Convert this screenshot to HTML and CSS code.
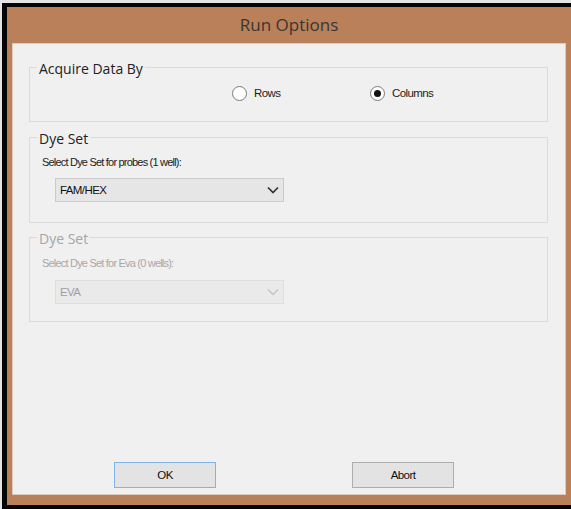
FILE: index.html
```html
<!DOCTYPE html>
<html lang="en">
<head>
<meta charset="utf-8">
<title>Run Options</title>
<link rel="stylesheet" href="styles.css">
</head>
<body>
<div class="window">
  <div class="titlebar">Run Options</div>
  <div class="panel">
    <div class="group group-acquire">
      <span class="legend">Acquire Data By</span>
      <div class="radio-row">
        <label class="option"><span class="radio"></span><span class="option-text">Rows</span></label>
        <label class="option"><span class="radio checked"></span><span class="option-text">Columns</span></label>
      </div>
    </div>

    <div class="group group-dye">
      <span class="legend">Dye Set</span>
      <div class="field-label">Select Dye Set for probes (1 well):</div>
      <div class="combo">
        <span class="combo-value">FAM/HEX</span>
        <svg class="chevron" width="12" height="8" viewBox="0 0 12 8"><polyline points="1,1.5 6,6.5 11,1.5" fill="none" stroke="#333" stroke-width="1.7"/></svg>
      </div>
    </div>

    <div class="group group-dye disabled">
      <span class="legend">Dye Set</span>
      <div class="field-label">Select Dye Set for Eva (0 wells):</div>
      <div class="combo">
        <span class="combo-value">EVA</span>
        <svg class="chevron" width="12" height="8" viewBox="0 0 12 8"><polyline points="1,1.5 6,6.5 11,1.5" fill="none" stroke="#c4c4c4" stroke-width="1.5"/></svg>
      </div>
    </div>

    <div class="buttons">
      <button class="btn btn-default" type="button">OK</button>
      <button class="btn" type="button">Abort</button>
    </div>
  </div>
</div>
</body>
</html>
```

FILE: styles.css
```css
* {
  box-sizing: border-box;
}

html, body {
  margin: 0;
  height: 100%;
}

body {
  background: #e4e4e4;
  overflow: hidden;
}

/* Dialog frame */
.window {
  margin: 3px 0 0 2px;
  width: 569px;
  height: 506px;
  background: #b9805a;
  border-top: 4px solid #050505;
  border-left: 5px solid #050505;
  border-bottom: 4px solid #050505;
  padding: 0 5px 10px 5px;
  display: flex;
  flex-direction: column;
}

.titlebar {
  height: 36px;
  line-height: 36px;
  text-align: center;
  font-family: "Open Sans", "Noto Sans", sans-serif;
  font-size: 17px;
  color: #3a3632;
}

/* Client area */
.panel {
  flex: 1;
  background: #f0f0f0;
  border: 1px solid #dccabd;
  padding: 23px 17px 6px 16px;
  display: flex;
  flex-direction: column;
  font-family: "Liberation Sans", Arial, sans-serif;
  font-size: 11.5px;
  color: #1c1c1c;
}

/* Group boxes */
.group {
  border: 1px solid #dadada;
  padding-left: 7px;
}

.group-acquire {
  height: 55px;
}

.group-dye {
  height: 86px;
  margin-top: 15px;
}

.group-dye.disabled {
  height: 85px;
  margin-top: 14px;
}

.legend {
  display: inline-block;
  vertical-align: top;
  margin-top: -7px;
  padding: 0 2px;
  background: #f0f0f0;
  font-family: "Open Sans", "Noto Sans", sans-serif;
  font-size: 14px;
  line-height: 16px;
  color: #222;
}

.disabled .legend {
  color: #a6a6a6;
}

/* Radio buttons */
.radio-row {
  display: flex;
  margin-top: 5px;
  padding-left: 195px;
}

.option {
  width: 138px;
  display: flex;
  align-items: center;
  gap: 7px;
  height: 16px;
}

.option-text {
  letter-spacing: -0.6px;
}

.radio {
  width: 15px;
  height: 15px;
  border-radius: 50%;
  border: 1px solid #7a7a7a;
  background: #fff;
  display: flex;
  align-items: center;
  justify-content: center;
}

.radio.checked::after {
  content: "";
  width: 7px;
  height: 7px;
  border-radius: 50%;
  background: #111;
}

/* Dye set fields */
.field-label {
  margin: 5px 0 0 5px;
  line-height: 14px;
  font-size: 11px;
  letter-spacing: -0.8px;
}

.disabled .field-label {
  margin-top: 6px;
  color: #a8a8a8;
}

.combo {
  margin: 9px 0 0 18px;
  width: 229px;
  height: 24px;
  border: 1px solid #cbcbcb;
  background: #e6e6e6;
  display: flex;
  align-items: center;
  justify-content: space-between;
  padding: 0 4px 0 4px;
}

.combo-value {
  letter-spacing: -0.6px;
  color: #111;
}

.disabled .combo {
  margin-top: 10px;
  border-color: #dedede;
  background: #eaeaea;
}

.disabled .combo-value {
  color: #a0a0a0;
}

/* Dialog buttons */
.buttons {
  margin-top: auto;
  display: flex;
  gap: 136px;
  padding-left: 85px;
}

.btn {
  width: 102px;
  height: 26px;
  border: 1px solid #adadad;
  background: #e3e3e3;
  font-family: "Liberation Sans", Arial, sans-serif;
  font-size: 11.5px;
  letter-spacing: -0.6px;
  color: #111;
  padding: 0;
}

.btn-default {
  border-color: #7eb4ea;
}
```
